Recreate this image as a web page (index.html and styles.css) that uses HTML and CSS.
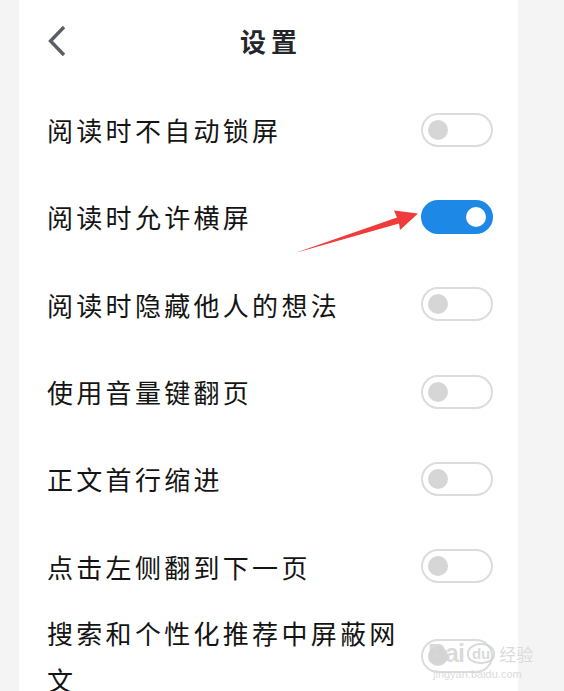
FILE: index.html
```html
<!DOCTYPE html>
<html lang="zh">
<head>
<meta charset="utf-8">
<link rel="stylesheet" href="styles.css">
</head>
<body>
<div class="panel">
  <header class="header">
    <svg class="back" width="20" height="32" viewBox="0 0 20 32"><path d="M17 2 L3.5 16 L17 30" fill="none" stroke="#5b5e66" stroke-width="3.4" stroke-linecap="butt" stroke-linejoin="miter"/></svg>
    <h1 class="title">设置</h1>
    <span></span>
  </header>
  <div class="row"><span class="label">阅读时不自动锁屏</span><span class="toggle"></span></div>
  <div class="row"><span class="label">阅读时允许横屏</span><span class="toggle on"></span></div>
  <div class="row"><span class="label">阅读时隐藏他人的想法</span><span class="toggle"></span></div>
  <div class="row"><span class="label">使用音量键翻页</span><span class="toggle"></span></div>
  <div class="row"><span class="label">正文首行缩进</span><span class="toggle"></span></div>
  <div class="row"><span class="label">点击左侧翻到下一页</span><span class="toggle"></span></div>
  <div class="row row-wrap"><span class="label">搜索和个性化推荐中屏蔽网文</span><span class="toggle"></span></div>
</div>
<svg class="arrow" width="564" height="691" viewBox="0 0 564 691"><polygon points="295,253 397,217.5 394,210.5 418,213.5 400,230 399,223.5" fill="#f13a3a"/></svg>
<div class="watermark">
  <div class="wm-top"><span class="wm-bai">Bai</span><span class="wm-du">du</span><span class="wm-jy">经验</span></div>
  <div class="wm-url">jingyan.baidu.com</div>
</div>
</body>
</html>
```
FILE: styles.css
```css
html, body {
  margin: 0;
  padding: 0;
}
body {
  background: #f4f4f4;
  width: 564px;
  height: 691px;
  overflow: hidden;
  position: relative;
  font-family: "Noto Sans CJK SC", "Noto Sans", sans-serif;
}
.panel {
  margin-left: 19px;
  width: 499px;
  height: 691px;
  background: #ffffff;
}
.header {
  height: 86px;
  display: grid;
  grid-template-columns: 1fr auto 1fr;
  align-items: center;
  padding: 0 0 4px 28px;
  box-sizing: border-box;
}
.back {
  display: block;
}
.title {
  margin: 0;
  font-size: 26px;
  font-weight: 700;
  letter-spacing: 5px;
  padding-left: 5px;
  color: #25262b;
  line-height: 1;
  transform: translateX(-14px);
}
.row {
  height: 87.3px;
  display: flex;
  align-items: center;
  padding: 0 25px 0 28px;
  gap: 12px;
  box-sizing: border-box;
}
.label {
  flex: 1;
  font-size: 26px;
  letter-spacing: 3.3px;
  color: #141414;
  line-height: 47px;
}
.row-wrap {
  height: 92px;
  align-items: center;
}
.toggle {
  flex: none;
  width: 72px;
  height: 34px;
  box-sizing: border-box;
  border: 2px solid #dcdcdc;
  border-radius: 17px;
  position: relative;
  background: #fff;
}
.toggle::after {
  content: "";
  position: absolute;
  left: 5px;
  top: 5px;
  width: 20px;
  height: 20px;
  border-radius: 50%;
  background: #d6d6d6;
}
.toggle.on {
  background: #1e88e6;
  border-color: #1e88e6;
}
.toggle.on::after {
  left: auto;
  right: 5px;
  background: #ffffff;
}
.arrow {
  position: absolute;
  left: 0;
  top: 0;
  pointer-events: none;
}
.watermark {
  position: absolute;
  left: 428px;
  top: 640px;
  font-family: "Liberation Sans", sans-serif;
  pointer-events: none;
  color: rgba(212, 212, 212, 0.85);
}
.wm-top {
  display: flex;
  align-items: center;
  height: 26px;
}
.wm-bai {
  font-size: 25px;
  font-weight: 700;
  letter-spacing: -1px;
}
.wm-du {
  font-size: 15px;
  font-weight: 700;
  margin-left: 3px;
  padding: 0 3px;
  border: 2px solid rgba(212, 212, 212, 0.85);
  border-radius: 50% 50% 45% 45%;
  line-height: 17px;
}
.wm-jy {
  font-family: "Noto Sans CJK SC", sans-serif;
  font-size: 17px;
  margin-left: 4px;
}
.wm-url {
  font-size: 11px;
  margin-left: 5px;
  margin-top: 2px;
}
```
